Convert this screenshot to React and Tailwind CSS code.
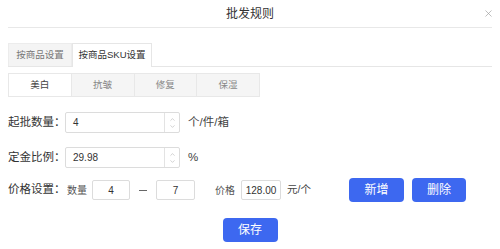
import { ChevronUp, ChevronDown, X } from "lucide-react";

const font = { fontFamily: '"Liberation Sans", "Noto Sans CJK SC", sans-serif' };

function NumberBox({ value }) {
  return (
    <div className="flex shrink-0 w-[115px] h-[21px] border border-[#dcdcdc] rounded-[2px] bg-white">
      <div className="flex-1 flex items-center pl-[7px] text-[10px] text-[#333]">{value}</div>
      <div className="w-[15px] border-l border-[#e3e3e3] flex flex-col items-center justify-center text-[#999]">
        <ChevronUp size={7} strokeWidth={1.5} />
        <ChevronDown size={7} strokeWidth={1.5} />
      </div>
    </div>
  );
}

function SmallBox({ value, w }) {
  return (
    <div className={`${w} shrink-0 h-[20px] border border-[#dcdcdc] rounded-[2px] flex items-center justify-center text-[10px] text-[#333]`}>
      {value}
    </div>
  );
}

export default function App() {
  const skuTabs = ["美白", "抗皱", "修复", "保湿"];
  return (
    <div className="w-[500px] h-[249px] bg-white overflow-hidden" style={font}>
      {/* Header */}
      <div className="relative mx-2 h-[28px] border-b border-[#e8e8e8] flex items-center justify-center">
        <span className="text-[12px] text-[#333]">批发规则</span>
        <X size={11} strokeWidth={1.4} className="absolute right-[-2px] top-[8px] text-[#999]" />
      </div>

      {/* Outer tabs */}
      <div className="mx-2 mt-[15px] flex border-b border-[#e6e6e6] h-[24px]">
        <div className="w-[64px] bg-[#f4f4f4] border border-[#ececec] border-b-0 flex items-center justify-center text-[9.5px] text-[#777]">
          按商品设置
        </div>
        <div className="w-[80px] -mb-px bg-white border border-[#e6e6e6] border-b-0 flex items-center justify-center text-[9.5px] text-[#333]">
          按商品SKU设置
        </div>
      </div>

      {/* Inner tabs */}
      <div className="mx-2 mt-[6px] flex h-[24px] w-[252px] border border-[#e8e8e8]">
        {skuTabs.map((t, i) => (
          <div
            key={t}
            className={`flex-1 flex items-center justify-center text-[9.5px] ${
              i === 0 ? "bg-white text-[#444]" : "bg-[#f5f5f5] text-[#888] border-l border-[#e8e8e8]"
            }`}
          >
            {t}
          </div>
        ))}
      </div>

      {/* Form */}
      <div className="mx-2 mt-[15px] flex items-center">
        <span className="w-[57px] shrink-0 whitespace-nowrap text-[11.5px] text-[#333]">起批数量：</span>
        <NumberBox value="4" />
        <span className="ml-[8px] whitespace-nowrap text-[11.5px] text-[#444]">个/件/箱</span>
      </div>

      <div className="mx-2 mt-[14px] flex items-center">
        <span className="w-[57px] shrink-0 whitespace-nowrap text-[11.5px] text-[#333]">定金比例：</span>
        <NumberBox value="29.98" />
        <span className="ml-[8px] text-[11.5px] text-[#444]">%</span>
      </div>

      <div className="mx-2 mt-[10px] flex items-center h-[24px]">
        <span className="w-[59px] shrink-0 whitespace-nowrap text-[11.5px] text-[#333]">价格设置：</span>
        <span className="whitespace-nowrap text-[10px] text-[#555]">数量</span>
        <div className="ml-[5px]">
          <SmallBox value="4" w="w-[38px]" />
        </div>
        <span className="mx-[9px] w-[8px] h-px bg-[#666] shrink-0" />
        <SmallBox value="7" w="w-[39px]" />
        <span className="ml-[20px] whitespace-nowrap text-[10px] text-[#555]">价格</span>
        <div className="ml-[6px]">
          <SmallBox value="128.00" w="w-[40px]" />
        </div>
        <span className="ml-[6px] whitespace-nowrap text-[10.5px] text-[#444]">元/个</span>
        <button className="ml-[38px] shrink-0 w-[55px] h-[24px] rounded-[4px] bg-[#3d68f0] text-white text-[12px]">新增</button>
        <button className="ml-[8px] shrink-0 w-[54px] h-[24px] rounded-[4px] bg-[#3d68f0] text-white text-[12px]">删除</button>
      </div>

      <div className="mt-[16px] flex justify-center">
        <button className="w-[55px] h-[24px] rounded-[4px] bg-[#3d68f0] text-white text-[12px]">保存</button>
      </div>
    </div>
  );
}
